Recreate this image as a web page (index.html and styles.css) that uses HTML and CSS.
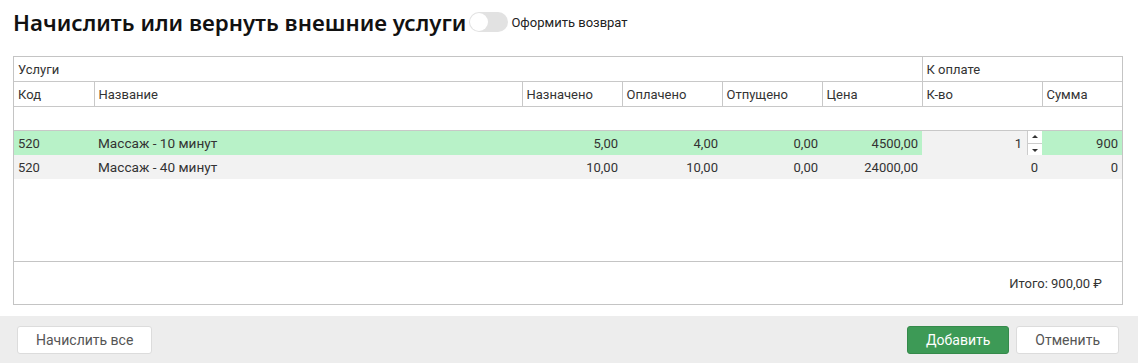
FILE: index.html
```html
<!DOCTYPE html>
<html>
  <head>
    <title>Начислить или вернуть внешние услуги</title>
    <meta name="viewport" content="width=device-width, initial-scale=1.0" />
    <link rel="stylesheet" href="styles.css">
  </head>
  <body>
    <div class="top">
      <h1>Начислить или вернуть внешние услуги</h1>
      <span class="toggle"><span class="knob"></span></span>
      <span class="toggle-label">Оформить возврат</span>
    </div>
    <div class="panel">
      <div class="grid">
        <table class="main">
          <colgroup>
            <col style="width: 80px" />
            <col style="width: 428px" />
            <col style="width: 100px" />
            <col style="width: 100px" />
            <col style="width: 100px" />
            <col style="width: 100px" />
            <col style="width: 120px" />
            <col style="width: 80px" />
          </colgroup>
          <thead>
            <tr>
              <th colspan="6">Услуги</th>
              <th colspan="2">К оплате</th>
            </tr>
            <tr>
              <th>Код</th>
              <th>Название</th>
              <th>Назначено</th>
              <th>Оплачено</th>
              <th>Отпущено</th>
              <th>Цена</th>
              <th>К-во</th>
              <th>Сумма</th>
            </tr>
            <tr class="filter">
              <th colspan="8"></th>
            </tr>
          </thead>
          <tbody>
            <tr class="selected">
              <td>520</td>
              <td class="name">Массаж - 10 минут</td>
              <td class="num">5,00</td>
              <td class="num">4,00</td>
              <td class="num">0,00</td>
              <td class="num">4500,00</td>
              <td class="qty">
                <span class="spin">
                  <span class="val">1</span>
                  <span class="arrows">
                    <span class="up"></span>
                    <span class="down"></span>
                  </span>
                </span>
              </td>
              <td class="num">900</td>
            </tr>
            <tr class="alt">
              <td>520</td>
              <td class="name">Массаж - 40 минут</td>
              <td class="num">10,00</td>
              <td class="num">10,00</td>
              <td class="num">0,00</td>
              <td class="num">24000,00</td>
              <td class="num">0</td>
              <td class="num">0</td>
            </tr>
          </tbody>
        </table>
      </div>
      <div class="total">Итого: 900,00 ₽</div>
    </div>
    <div class="actions">
      <button class="btn">Начислить все</button>
      <div class="right">
        <button class="btn primary">Добавить</button>
        <button class="btn">Отменить</button>
      </div>
    </div>
  </body>
</html>
```

FILE: styles.css
```css
body {
  margin: 0;
  font-family: Roboto, "Noto Sans", sans-serif;
  font-size: 13px;
  color: #333;
  background: white;
}

.top {
  display: flex;
  align-items: center;
  height: 44px;
  padding: 0 13px;
  margin-bottom: 12px;
}
.top h1 {
  margin: 0;
  font-family: "Noto Sans", sans-serif;
  font-size: 22.3px;
  font-weight: 600;
  color: #111;
}
.toggle {
  display: inline-block;
  width: 39px;
  height: 20px;
  border-radius: 10px;
  background: #e2e2e2;
  margin-left: 3px;
  position: relative;
}
.toggle .knob {
  position: absolute;
  top: 1px;
  left: 1px;
  width: 18px;
  height: 18px;
  border-radius: 50%;
  background: white;
}
.toggle-label {
  margin-left: 3px;
  font-size: 13px;
  color: #222;
}

.panel {
  margin: 0 15px 0 13px;
  height: 247px;
  border: 1px solid #c4c4c4;
  display: flex;
  flex-direction: column;
}
.grid {
  flex: 1;
}

table.main {
  border-collapse: collapse;
  table-layout: fixed;
  width: 100%;
}
table.main th {
  font-weight: normal;
  text-align: left;
  height: 24px;
  padding: 0 4px;
  border-right: 1px solid #c8c8c8;
  border-bottom: 1px solid #c8c8c8;
}
table.main th:last-child {
  border-right: none;
}
table.main tr.filter th {
  height: 23px;
}
table.main td {
  height: 24px;
  padding: 0 4px;
  white-space: nowrap;
}
table.main td.name {
  font-size: 13.6px;
}
table.main td.num {
  text-align: right;
}
tr.selected td {
  background: #b8f2c8;
}
tr.alt td {
  background: #f2f2f2;
}
tr.selected td.qty {
  background: #f2f2f2;
  padding: 0;
}
.spin {
  display: flex;
  height: 24px;
  justify-content: flex-end;
  align-items: center;
}
.spin .val {
  padding-right: 5px;
}
.arrows {
  display: flex;
  flex-direction: column;
  width: 14px;
  height: 24px;
  border-left: 1px solid #ccc;
  background: white;
}
.arrows span {
  flex: 1;
  position: relative;
}
.arrows .up {
  border-bottom: 1px solid #ccc;
}
.arrows .up::after,
.arrows .down::after {
  content: "";
  position: absolute;
  left: 4px;
  top: 4px;
  border-left: 3px solid transparent;
  border-right: 3px solid transparent;
}
.arrows .up::after {
  border-bottom: 3px solid #333;
}
.arrows .down::after {
  top: 5px;
  border-top: 3px solid #333;
}

.total {
  border-top: 1px solid #c4c4c4;
  height: 42px;
  display: flex;
  align-items: center;
  justify-content: flex-end;
  padding-right: 20px;
}

.actions {
  margin-top: 11px;
  background: #ededed;
  padding: 10px 19px 10px 17px;
  display: flex;
  justify-content: space-between;
}
.actions .right {
  display: flex;
  gap: 7px;
}
.btn {
  font-family: inherit;
  font-size: 14px;
  color: #555;
  background: white;
  border: 1px solid #dcdcdc;
  border-radius: 3px;
  height: 28px;
  padding: 0 18px;
}
.btn.primary {
  background: #3d9a56;
  border-color: #358a4b;
  color: white;
}
```
